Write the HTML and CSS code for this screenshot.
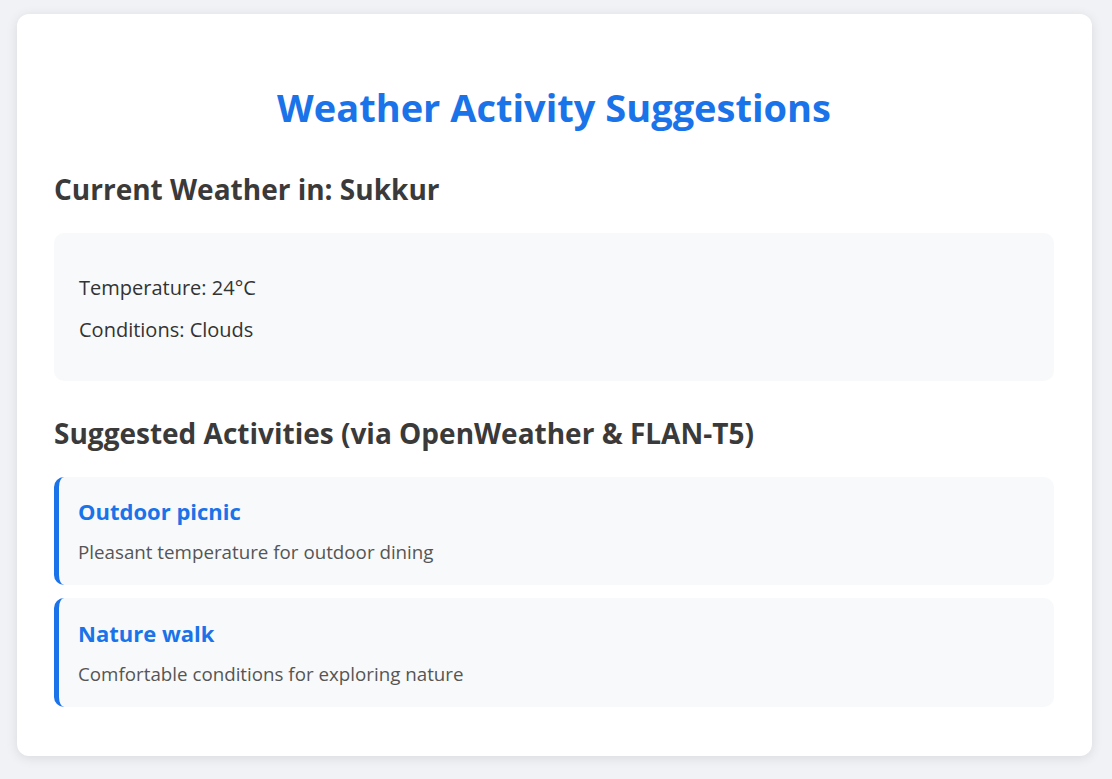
FILE: index.html
```html
<!DOCTYPE html>
<html lang="en">
<head>
<meta charset="utf-8">
<title>Weather Activity Suggestions</title>
<link rel="stylesheet" href="styles.css">
</head>
<body>
<main class="card">
  <h1 class="title">Weather Activity Suggestions</h1>
  <h2 class="section-title">Current Weather in: Sukkur</h2>
  <div class="weather-info">
    <p>Temperature: 24°C</p>
    <p>Conditions: Clouds</p>
  </div>
  <h2 class="section-title">Suggested Activities (via OpenWeather &amp; FLAN-T5)</h2>
  <div class="activity">
    <h3>Outdoor picnic</h3>
    <p>Pleasant temperature for outdoor dining</p>
  </div>
  <div class="activity">
    <h3>Nature walk</h3>
    <p>Comfortable conditions for exploring nature</p>
  </div>
</main>
</body>
</html>
```

FILE: styles.css
```css
* { box-sizing: border-box; }

html, body {
  margin: 0;
  padding: 0;
}

body {
  background: #f0f2f5;
  font-family: "Open Sans", "Noto Sans", sans-serif;
  font-size: 20px;
  line-height: 1.5;
  color: #333;
  padding: 14px 0 24px;
}

.card {
  width: 1075px;
  margin: 0 20px 0 17px;
  background: #fff;
  border-radius: 12px;
  box-shadow: 0 2px 12px rgba(0, 0, 0, 0.1);
  padding: 37px 38px 37.5px 37px;
}

.title {
  color: #1a73e8;
  text-align: center;
  font-size: 38px;
  font-weight: 700;
  line-height: 60px;
  margin: 26px 0 30px;
}

.section-title {
  color: #3a3a3a;
  font-size: 28px;
  font-weight: 700;
  line-height: 44px;
  margin: 0 0 22px;
}

.weather-info {
  background: #f8f9fa;
  border-radius: 10px;
  padding: 27px 25px 23px;
  margin-bottom: 30px;
}

.weather-info p {
  margin: 12.5px 0;
  line-height: 30px;
  font-size: 20px;
}

.activity {
  background: #f8f9fa;
  border-left: 5px solid #1a73e8;
  border-radius: 10px;
  padding: 18.75px 19px;
  margin-bottom: 13px;
}

.activity:last-child { margin-bottom: 11.5px; }

.activity h3 {
  margin: 0 0 10px;
  color: #1a73e8;
  font-size: 22px;
  font-weight: 700;
  line-height: 33px;
}

.activity p {
  margin: 0;
  color: #555;
  font-size: 18.75px;
  line-height: 28px;
}
```
